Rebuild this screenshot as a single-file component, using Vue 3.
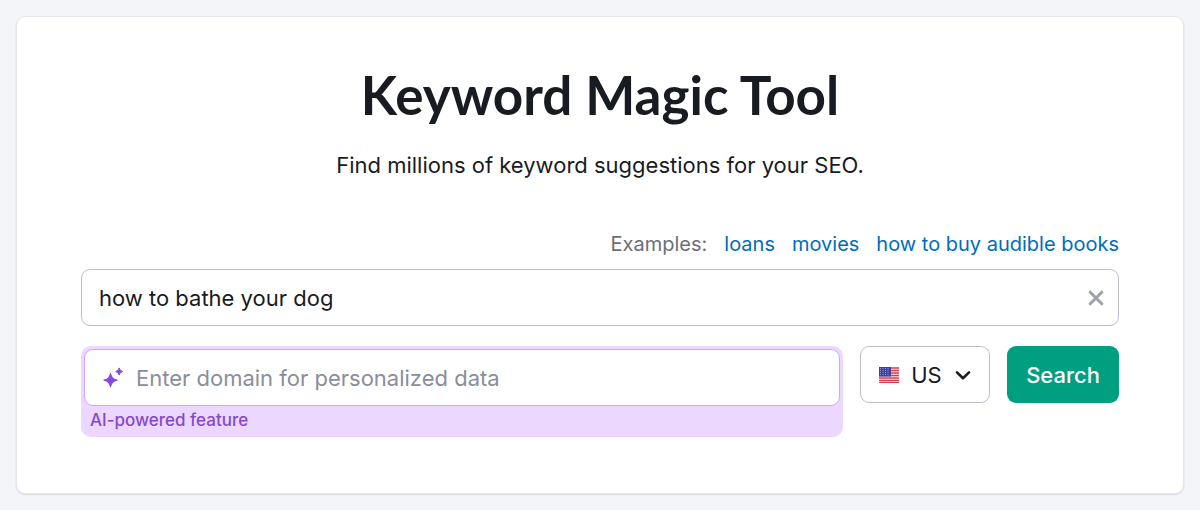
<script setup>
import { ref } from 'vue'

const examples = ['loans', 'movies', 'how to buy audible books']
const keyword = ref('how to bathe your dog')
const domain = ref('')
const country = ref('US')
const starRows = [1, 3, 5, 7]
const starCols = [1.5, 4, 6.5, 9]
</script>

<template>
  <main class="page">
    <section class="card">
      <h1 class="title">Keyword Magic Tool</h1>
      <p class="subtitle">Find millions of keyword suggestions for your SEO.</p>

      <form class="form" @submit.prevent>
        <nav class="examples" aria-label="Examples">
          <span class="examples-label">Examples:</span>
          <a v-for="item in examples" :key="item" href="#" @click.prevent="keyword = item">{{ item }}</a>
        </nav>

        <div class="field">
          <input v-model="keyword" class="input" type="text" aria-label="Keyword" />
          <button class="clear" type="button" aria-label="Clear" @click="keyword = ''">
            <svg width="16" height="16" viewBox="0 0 16 16" fill="none" stroke="currentColor" stroke-width="3" stroke-linecap="round">
              <path d="M2.2 2.2 13.8 13.8M13.8 2.2 2.2 13.8" />
            </svg>
          </button>
        </div>

        <div class="row">
          <div class="ai">
            <div class="field ai-field">
              <svg class="sparkle" width="22" height="22" viewBox="0 0 22 22" fill="currentColor" aria-hidden="true">
                <path d="M8.500 6.500Q9.500 12.100 15 13.100 9.500 14.100 8.500 19.700 7.500 14.100 2 13.100 7.500 12.100 8.500 6.500Z" stroke="currentColor" stroke-width="1.200" stroke-linejoin="round" />
                <path d="M17.200 .900Q17.700 4 20.700 4.500 17.700 5 17.200 8.100 16.700 5 13.700 4.500 16.700 4 17.200 .900Z" stroke="currentColor" stroke-width="1" stroke-linejoin="round" />
              </svg>
              <input id="domain" v-model="domain" class="input" type="text" placeholder="Enter domain for personalized data" />
            </div>
            <label class="ai-label" for="domain">AI-powered feature</label>
          </div>

          <div class="country">
            <svg class="flag" width="20" height="16" viewBox="0 0 20 16" aria-hidden="true">
              <rect width="20" height="16" fill="#f7e9ec" />
              <path d="M0 1H20M0 3.500H20M0 6H20M0 8.500H20M0 11H20M0 13.300H20M0 15.500H20" stroke="#d9414f" stroke-width="1.300" />
              <rect width="12" height="9.500" fill="#3c3f9f" />
              <g fill="#a9abdf">
                <template v-for="y in starRows" :key="y">
                  <circle v-for="x in starCols" :key="x" :cx="x" :cy="y + .5" r=".6" />
                </template>
              </g>
            </svg>
            <select v-model="country" class="select" aria-label="Country">
              <option>US</option>
              <option>UK</option>
              <option>CA</option>
            </select>
            <svg class="chevron" width="16" height="10" viewBox="0 0 16 10" fill="none" stroke="currentColor" stroke-width="2.600" stroke-linecap="round" stroke-linejoin="round" aria-hidden="true">
              <path d="M2 2.400 8 8.200 14 2.400" />
            </svg>
          </div>

          <button class="search" type="submit">Search</button>
        </div>
      </form>
    </section>
  </main>
</template>

<style>
body {
  margin: 0;
  background: #f4f5f9;
}
</style>

<style scoped>
.page {
  padding: 16px;
  font-family: Inter, "Liberation Sans", sans-serif;
  color: #191b23;
}

.page *,
.page *::before {
  box-sizing: border-box;
}

.card {
  padding: 46px 64px 56px;
  border: 1px solid #e4e6ec;
  border-radius: 9px;
  background: #fff;
  box-shadow: 0 1px 2px rgba(25, 27, 35, 0.12);
}

.title {
  margin: 0;
  font-family: Lato, Inter, sans-serif;
  font-size: 53px;
  line-height: 64px;
  font-weight: 700;
  text-align: center;
}

.subtitle {
  margin: 22px 0 0;
  font-size: 22px;
  line-height: 32px;
  text-align: center;
}

.form {
  margin-top: 48px;
}

.examples {
  display: flex;
  justify-content: flex-end;
  gap: 17px;
  margin-bottom: 10px;
  font-size: 20px;
  line-height: 30px;
}

.examples-label {
  color: #6c6e79;
}

.examples a {
  color: #006dba;
  text-decoration: none;
}

.field {
  display: flex;
  align-items: center;
  height: 57px;
  padding: 0 14px 0 17px;
  border: 1px solid #bcbfc9;
  border-radius: 9px;
  background: #fff;
}

.input {
  flex: 1;
  min-width: 0;
  height: 100%;
  padding: 0;
  border: 0;
  outline: 0;
  background: transparent;
  font: inherit;
  font-size: 22px;
  color: inherit;
}

.input::placeholder {
  color: #8a8e9b;
  opacity: 1;
}

.clear {
  display: flex;
  padding: 0;
  border: 0;
  background: none;
  color: #9fa2ae;
}

.row {
  display: flex;
  align-items: flex-start;
  gap: 17px;
  margin-top: 20px;
}

.ai {
  flex: 1;
  min-width: 0;
  padding: 3px 3px 0;
  border-radius: 10px;
  background: #ebd7ff;
}

.ai-field {
  gap: 12px;
  border-color: #cfa8f5;
}

.sparkle {
  flex: none;
  color: #8649d9;
}

.ai-label {
  display: block;
  padding: 0 6px 3px;
  font-size: 17px;
  line-height: 28px;
  font-weight: 500;
  color: #8649c9;
}

.country {
  display: grid;
  grid-template-columns: 20px 1fr 16px;
  align-items: center;
  width: 130px;
  height: 57px;
  padding: 0 18px;
  border: 1px solid #bcbfc9;
  border-radius: 9px;
}

.select {
  grid-area: 1 / 1 / 2 / 4;
  height: 55px;
  padding: 0 16px 0 32px;
  border: 0;
  outline: 0;
  appearance: none;
  background: transparent;
  font: inherit;
  font-size: 22px;
  color: inherit;
}

.flag {
  grid-area: 1 / 1;
}

.chevron {
  grid-area: 1 / 3;
  pointer-events: none;
}

.search {
  height: 57px;
  padding: 0 19px;
  border: 0;
  border-radius: 9px;
  background: #009f81;
  color: #fff;
  font: inherit;
  font-size: 22px;
  font-weight: 500;
}
</style>
